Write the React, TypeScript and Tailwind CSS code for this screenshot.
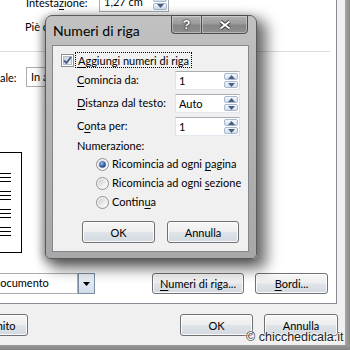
import React from "react";

const U = ({ children }: { children: React.ReactNode }) => (
  <span className="underline decoration-1 underline-offset-[2px]">{children}</span>
);

function Btn({ className = "", children }: { className?: string; children: React.ReactNode }) {
  return (
    <div
      className={`flex shrink-0 items-center justify-center rounded-[3px] border border-[#707070] bg-[linear-gradient(180deg,#f7f7f7_0%,#eeeeee_48%,#dfe4ea_52%,#d3d9e0_100%)] shadow-[inset_0_0_0_1px_rgba(255,255,255,0.85)] text-[11px] leading-none text-black ${className}`}
    >
      {children}
    </div>
  );
}

function Arrow({ up }: { up?: boolean }) {
  return (
    <svg width="7" height="4" viewBox="0 0 7 4">
      <path d={up ? "M0 4 L3.5 0 L7 4Z" : "M0 0 L3.5 4 L7 0Z"} fill="#4d5f80" />
    </svg>
  );
}

function SpinBtns() {
  return (
    <div className="flex w-[15px] flex-col gap-px py-px pr-px">
      <div className="flex flex-1 items-center justify-center rounded-[2px] border border-[#a9b8cc] bg-[linear-gradient(180deg,#f3f7fc,#d3e0f0)]">
        <Arrow up />
      </div>
      <div className="flex flex-1 items-center justify-center rounded-[2px] border border-[#a9b8cc] bg-[linear-gradient(180deg,#f3f7fc,#d3e0f0)]">
        <Arrow />
      </div>
    </div>
  );
}

function Spin({ value, className = "" }: { value: string; className?: string }) {
  return (
    <div
      className={`flex h-[19px] shrink-0 border border-[#abadb3] border-b-[#e3e9ef] border-l-[#e2e3ea] border-r-[#dbdfe6] bg-white ${className}`}
    >
      <div className="flex-1 pl-[3px] text-[11px] leading-[17px] text-black">{value}</div>
      <SpinBtns />
    </div>
  );
}

function Radio({ on }: { on?: boolean }) {
  return (
    <svg width="13" height="13" viewBox="0 0 13 13" className="shrink-0">
      <defs>
        <linearGradient id={on ? "rgOn" : "rgOff"} x1="0" y1="0" x2="1" y2="1">
          <stop offset="0" stopColor="#c9ccd1" />
          <stop offset="1" stopColor="#ffffff" />
        </linearGradient>
        <radialGradient id="dot" cx="0.4" cy="0.35" r="0.7">
          <stop offset="0" stopColor="#a8c8ee" />
          <stop offset="0.5" stopColor="#3d6bb0" />
          <stop offset="1" stopColor="#1d3d72" />
        </radialGradient>
      </defs>
      <circle cx="6.5" cy="6.5" r="6" fill="#f4f4f4" stroke="#8e8f8f" />
      <circle cx="6.5" cy="6.5" r="4.3" fill={on ? "url(#rgOn)" : "url(#rgOff)"} />
      {on && <circle cx="6.5" cy="6.5" r="3.3" fill="url(#dot)" />}
    </svg>
  );
}

function Check() {
  return (
    <svg width="13" height="13" viewBox="0 0 13 13" className="shrink-0">
      <defs>
        <linearGradient id="cb" x1="0" y1="0" x2="1" y2="1">
          <stop offset="0" stopColor="#cbcfd5" />
          <stop offset="1" stopColor="#f6f6f6" />
        </linearGradient>
      </defs>
      <rect x="0.5" y="0.5" width="12" height="12" fill="#fff" stroke="#8e8f8f" />
      <rect x="2.5" y="2.5" width="8" height="8" fill="url(#cb)" stroke="#b9bec6" />
      <path d="M3 6.3 L5.4 9 L10 3" fill="none" stroke="#4a5f90" strokeWidth="2" />
    </svg>
  );
}

function Preview() {
  const groups = [0, 1, 2, 3];
  return (
    <div className="ml-[-60px] mt-[65px] flex h-[101px] w-[82px] flex-col border border-black bg-white">
      <div className="mt-[20px] flex flex-col gap-[9px] pl-[59px]">
        {groups.map((g) => (
          <div key={g} className="flex flex-col gap-[3px]">
            <div className="h-px w-[11px] bg-black" />
            <div className="h-px w-[11px] bg-black" />
            <div className="h-px w-[11px] bg-black" />
          </div>
        ))}
      </div>
    </div>
  );
}

function TitleBtn({ className = "", children }: { className?: string; children: React.ReactNode }) {
  return (
    <div
      className={`flex h-[19px] items-center justify-center border border-[#4b4b4b] bg-[linear-gradient(180deg,#b2b2b2_0%,#9b9b9b_45%,#858585_55%,#8f8f8f_100%)] shadow-[inset_0_0_0_1px_rgba(255,255,255,0.35)] ${className}`}
    >
      {children}
    </div>
  );
}

function Dialog() {
  return (
    <div className="absolute left-[45px] top-[15px] flex h-[244px] w-[212px] flex-col rounded-t-[7px] rounded-b-[5px] border border-[#5a5a5a] bg-[linear-gradient(180deg,#c2c2c2_0%,#b3b3b3_40%,#a8a8a8_100%)] shadow-[7px_7px_14px_3px_rgba(0,0,0,0.55),-3px_2px_8px_rgba(0,0,0,0.35)]">
      <div className="flex h-[29px] items-start">
        <div className="ml-[7px] mt-[6px] text-[14px] leading-[17px] text-black">Numeri di riga</div>
        <div className="ml-auto mr-[8px] mt-[-1px] flex">
          <TitleBtn className="w-[30px] rounded-bl-[4px] border-r-0">
            <span className="font-['Liberation_Sans',sans-serif] text-[13px] font-bold leading-none text-white [text-shadow:0_0_1px_#222,0_0_1px_#222,0_0_2px_#333]">
              ?
            </span>
          </TitleBtn>
          <TitleBtn className="w-[47px] rounded-br-[4px]">
            <svg width="14" height="10" viewBox="0 0 14 10">
              <path d="M2.5 1.5 L11.5 8.5 M11.5 1.5 L2.5 8.5" stroke="#333" strokeWidth="3.6" />
              <path d="M2.5 1.5 L11.5 8.5 M11.5 1.5 L2.5 8.5" stroke="#fff" strokeWidth="2" />
            </svg>
          </TitleBtn>
        </div>
      </div>
      <div className="ml-[6px] flex h-[207px] w-[197px] flex-col border border-[#828790] bg-[#f0f0f0] text-[11px] text-black">
        <div className="ml-[8px] mt-[6px] flex h-[16px] items-center">
          <Check />
          <div className="ml-[1px] flex h-[16px] items-center border border-dotted border-black px-[2px] leading-none">
            <U>A</U>ggiungi numeri di riga
          </div>
        </div>
        <div className="mt-[3px] flex h-[19px] items-center">
          <div className="ml-[24px] w-[98px]">
            <U>C</U>omincia da:
          </div>
          <Spin value="1" className="w-[65px]" />
        </div>
        <div className="mt-[4px] flex h-[19px] items-center">
          <div className="ml-[24px] w-[98px]">
            <U>D</U>istanza dal testo:
          </div>
          <Spin value="Auto" className="w-[65px]" />
        </div>
        <div className="mt-[4px] flex h-[19px] items-center">
          <div className="ml-[24px] w-[98px]">
            C<U>o</U>nta per:
          </div>
          <Spin value="1" className="w-[65px]" />
        </div>
        <div className="ml-[24px] mt-[2px] h-[16px] leading-[16px]">Numerazione:</div>
        <div className="mt-[1px] flex flex-col">
          <div className="flex h-[19px] items-center pl-[43px]">
            <Radio on />
            <span className="ml-[3px]">
              Ricomincia ad ogni <U>p</U>agina
            </span>
          </div>
          <div className="flex h-[19px] items-center pl-[43px]">
            <Radio />
            <span className="ml-[3px]">
              Ricomincia ad ogni <U>s</U>ezione
            </span>
          </div>
          <div className="flex h-[19px] items-center pl-[43px]">
            <Radio />
            <span className="ml-[3px]">
              Contin<U>u</U>a
            </span>
          </div>
        </div>
        <div className="mt-[9px] flex">
          <Btn className="ml-[29px] h-[22px] w-[73px]">OK</Btn>
          <Btn className="ml-[12px] h-[22px] w-[72px]">Annulla</Btn>
        </div>
      </div>
    </div>
  );
}

export default function App() {
  return (
    <div className="relative flex h-[350px] w-[350px] flex-col overflow-hidden whitespace-nowrap bg-[#f0f0f0] font-['Lato',sans-serif] text-[11px] text-black">
      <div className="flex h-[345px]">
        <div className="flex w-[345px] flex-col">
          <div className="flex h-[304px] w-[337px] flex-col overflow-hidden border-b border-r border-[#898c95] bg-white">
            <div className="flex h-[12px] items-end">
              <div className="mb-[3px] ml-[26px] w-[73px] leading-[12px]">
                Intesta<U>z</U>ione:
              </div>
              <div className="flex h-[20px] shrink-0 border border-[#abadb3] bg-white">
                <div className="w-[53px] pl-[4px] leading-[18px]">1,27 cm</div>
                <SpinBtns />
              </div>
            </div>
            <div className="flex h-[30px] items-center pl-[25px]">Piè d</div>
            <div className="mt-[9px] h-px w-[330px] bg-[#d5dde5]" />
            <div className="mt-[15px] flex h-[20px] items-center">
              <div className="w-[26px] leading-none">ale:</div>
              <div className="flex h-[20px] w-[120px] items-center border border-[#abadb3] pl-[4px]">In a</div>
            </div>
            <Preview />
            <div className="mt-[20px] flex h-[21px]">
              <div className="ml-[-10px] flex h-[21px] w-[88px] items-center border border-[#abadb3] bg-white pl-[3px]">
                documento
              </div>
              <div className="flex h-[21px] w-[17px] items-center justify-center border border-[#7b8ea4] bg-[linear-gradient(180deg,#f2f6fb,#d0dcea)]">
                <svg width="7" height="4" viewBox="0 0 7 4">
                  <path d="M0 0 L3.5 4 L7 0Z" fill="#000" />
                </svg>
              </div>
              <Btn className="ml-[57px] h-[21px] w-[92px]">
                <U>N</U>umeri di riga...
              </Btn>
              <Btn className="ml-[11px] h-[21px] w-[73px]">
                <U>B</U>ordi...
              </Btn>
            </div>
          </div>
          <div className="mt-[10px] flex h-[22px]">
            <Btn className="ml-[-50px] h-[22px] w-[78px]">Predefinito</Btn>
            <Btn className="ml-[152px] h-[22px] w-[73px]">OK</Btn>
            <Btn className="ml-[11px] h-[22px] w-[74px]">Annulla</Btn>
          </div>
        </div>
        <div className="w-[5px] bg-[linear-gradient(90deg,#a8a8a8,#8a8a8a)]" />
      </div>
      <div className="h-[5px] bg-[linear-gradient(180deg,#9a9a9a,#858585)]" />
      <div className="absolute left-[246px] top-[329px] font-['Liberation_Sans',sans-serif] text-[12.5px] leading-[16px] text-[#222] [text-shadow:0_0_2px_#fff,0_0_2px_#fff,0_0_1px_#fff]">
        © chicchedicala.it
      </div>
      <Dialog />
    </div>
  );
}
